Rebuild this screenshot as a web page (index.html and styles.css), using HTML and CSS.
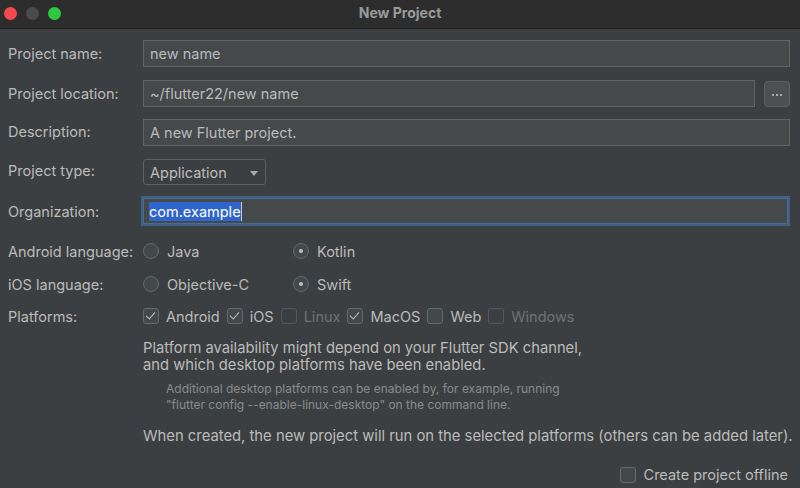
FILE: index.html
```html
<!DOCTYPE html>
<html>
<head>
<meta charset="utf-8">
<link rel="stylesheet" href="styles.css">
</head>
<body>
<div class="window">
  <div class="titlebar">
    <div class="lights">
      <span class="light red"></span>
      <span class="light gray"></span>
      <span class="light green"></span>
    </div>
    <div class="title">New Project</div>
  </div>
  <div class="content">
    <div class="row r1">
      <div class="label">Project name:</div>
      <div class="control"><div class="input">new name</div></div>
    </div>
    <div class="row r2">
      <div class="label">Project location:</div>
      <div class="control loc">
        <div class="input">~/flutter22/new name</div>
        <div class="browse"><span></span><span></span><span></span></div>
      </div>
    </div>
    <div class="row r3">
      <div class="label up">Description:</div>
      <div class="control"><div class="input">A new Flutter project.</div></div>
    </div>
    <div class="row r4">
      <div class="label up">Project type:</div>
      <div class="control"><div class="select">Application<span class="caret"></span></div></div>
    </div>
    <div class="row r5">
      <div class="label">Organization:</div>
      <div class="control"><div class="input focus"><span class="sel">com.example</span><span class="cursor"></span></div></div>
    </div>
    <div class="row r6">
      <div class="label">Android language:</div>
      <div class="control opts">
        <div class="opt w150"><span class="radio"></span>Java</div>
        <div class="opt"><span class="radio on"></span>Kotlin</div>
      </div>
    </div>
    <div class="row r7">
      <div class="label">iOS language:</div>
      <div class="control opts">
        <div class="opt w150"><span class="radio"></span>Objective-C</div>
        <div class="opt"><span class="radio on"></span>Swift</div>
      </div>
    </div>
    <div class="row r8">
      <div class="label">Platforms:</div>
      <div class="control opts checks">
        <div class="opt"><span class="check on"></span>Android</div>
        <div class="opt"><span class="check on"></span>iOS</div>
        <div class="opt dis"><span class="check"></span>Linux</div>
        <div class="opt"><span class="check on"></span>MacOS</div>
        <div class="opt"><span class="check"></span>Web</div>
        <div class="opt dis"><span class="check"></span>Windows</div>
      </div>
    </div>
    <div class="info">
      <p class="main">Platform availability might depend on your Flutter SDK channel,<br>and which desktop platforms have been enabled.</p>
      <p class="small">Additional desktop platforms can be enabled by, for example, running<br>"flutter config --enable-linux-desktop" on the command line.</p>
      <p class="when">When created, the new project will run on the selected platforms (others can be added later).</p>
    </div>
    <div class="offline">
      <div class="opt"><span class="check"></span>Create project offline</div>
    </div>
  </div>
</div>
</body>
</html>
```
FILE: styles.css
```css
* { box-sizing: border-box; }
html, body { margin: 0; padding: 0; }
body {
  width: 800px;
  height: 488px;
  overflow: hidden;
  background: #3c3f41;
  font-family: "Inter", "Liberation Sans", sans-serif;
  font-size: 14.5px;
  color: #bbbbbb;
}
.titlebar {
  height: 29px;
  background: #2d2d2d;
  border-bottom: 1px solid #1e1e1e;
  position: relative;
  display: flex;
  align-items: center;
  justify-content: center;
}
.lights {
  position: absolute;
  left: 4px;
  top: 7px;
  display: flex;
  gap: 9px;
}
.light {
  width: 13px;
  height: 13px;
  border-radius: 50%;
  display: block;
}
.red { background: #f5484f; }
.gray { background: #4b4b4b; }
.green { background: #2bc840; }
.title {
  font-weight: 700;
  color: #9a9a9a;
  font-size: 14px;
  margin-top: -4px;
}
.content {
  padding: 0 10px 0 8px;
}
.row {
  display: flex;
  align-items: center;
}
.label {
  width: 135px;
  flex: none;
  white-space: nowrap;
}
.label.up { margin-top: -3px; }
.control {
  flex: 1;
  display: flex;
  align-items: center;
  height: 100%;
}
.r1 { margin-top: 11px; height: 27px; }
.r2 { margin-top: 13px; height: 27px; }
.r3 { margin-top: 12px; height: 27px; }
.r4 { margin-top: 13px; height: 26px; }
.r5 { margin-top: 11px; height: 30px; }
.r6 { margin-top: 15px; height: 20px; }
.r7 { margin-top: 13px; height: 20px; }
.r8 { margin-top: 12px; height: 20px; }
.input {
  flex: 1;
  height: 27px;
  background: #45494a;
  border: 1px solid #646464;
  padding: 0 6px;
  display: flex;
  align-items: center;
  white-space: nowrap;
}
.input.focus {
  height: 30px;
  margin-left: -2px;
  border: 2px solid #3d6185;
  box-shadow: inset 0 0 0 1px #466d94;
  padding-left: 6px;
}
.sel {
  background: #2f65ca;
  color: #ffffff;
  line-height: 19px;
}
.cursor {
  display: inline-block;
  width: 1px;
  height: 19px;
  background: #c8c8c8;
}
.loc { gap: 9px; }
.browse {
  width: 26px;
  height: 26px;
  flex: none;
  background: #4c5052;
  border: 1px solid #5e6162;
  border-radius: 4px;
  display: flex;
  align-items: center;
  justify-content: center;
  gap: 2px;
  padding-top: 2px;
}
.browse span {
  width: 2px;
  height: 2px;
  background: #a8a8a8;
}
.select {
  width: 123px;
  height: 26px;
  border: 1px solid #5e6162;
  border-radius: 3px;
  background: #3c3f41;
  display: flex;
  align-items: center;
  padding-left: 6px;
  position: relative;
}
.caret {
  position: absolute;
  left: 106px;
  top: 11px;
  width: 0;
  height: 0;
  border-left: 4px solid transparent;
  border-right: 4px solid transparent;
  border-top: 5px solid #a9a9a9;
}
.opts { gap: 0; }
.opt {
  display: flex;
  align-items: center;
  white-space: nowrap;
}
.w150 { width: 150px; }
.radio {
  width: 16px;
  height: 16px;
  border-radius: 50%;
  border: 1px solid #666a6c;
  background: #43494a;
  margin-right: 8px;
  position: relative;
  flex: none;
}
.radio.on::after {
  content: "";
  position: absolute;
  left: 5px;
  top: 5px;
  width: 4px;
  height: 4px;
  border-radius: 50%;
  background: #c0c0c0;
}
.check {
  width: 16px;
  height: 16px;
  border-radius: 3px;
  border: 1px solid #666a6c;
  background: #43494a;
  margin-right: 7px;
  position: relative;
  flex: none;
}
.check.on::after {
  content: "";
  position: absolute;
  left: 4px;
  top: 1px;
  width: 4px;
  height: 8px;
  border-right: 1.5px solid #c4c4c4;
  border-bottom: 1.5px solid #c4c4c4;
  transform: rotate(40deg);
}
.checks .opt { margin-right: 7px; }
.opt.dis { color: #6f7273; }
.opt.dis .check { background: transparent; border-color: #54585a; }
.info {
  padding-left: 135px;
  margin-top: 14px;
}
.info p { margin: 0; }
.main { line-height: 17px; font-size: 14.75px; }
.small {
  font-size: 12px;
  line-height: 16px;
  color: #888b8d;
  padding-left: 23px;
  margin-top: 7px !important;
}
.when {
  margin-top: 15px !important;
  line-height: 16px;
  white-space: nowrap;
  font-size: 14.8px;
}
.offline {
  display: flex;
  justify-content: flex-end;
  margin-top: 22px;
  padding-right: 2px;
}
.offline .check { margin-right: 8px; }
```
